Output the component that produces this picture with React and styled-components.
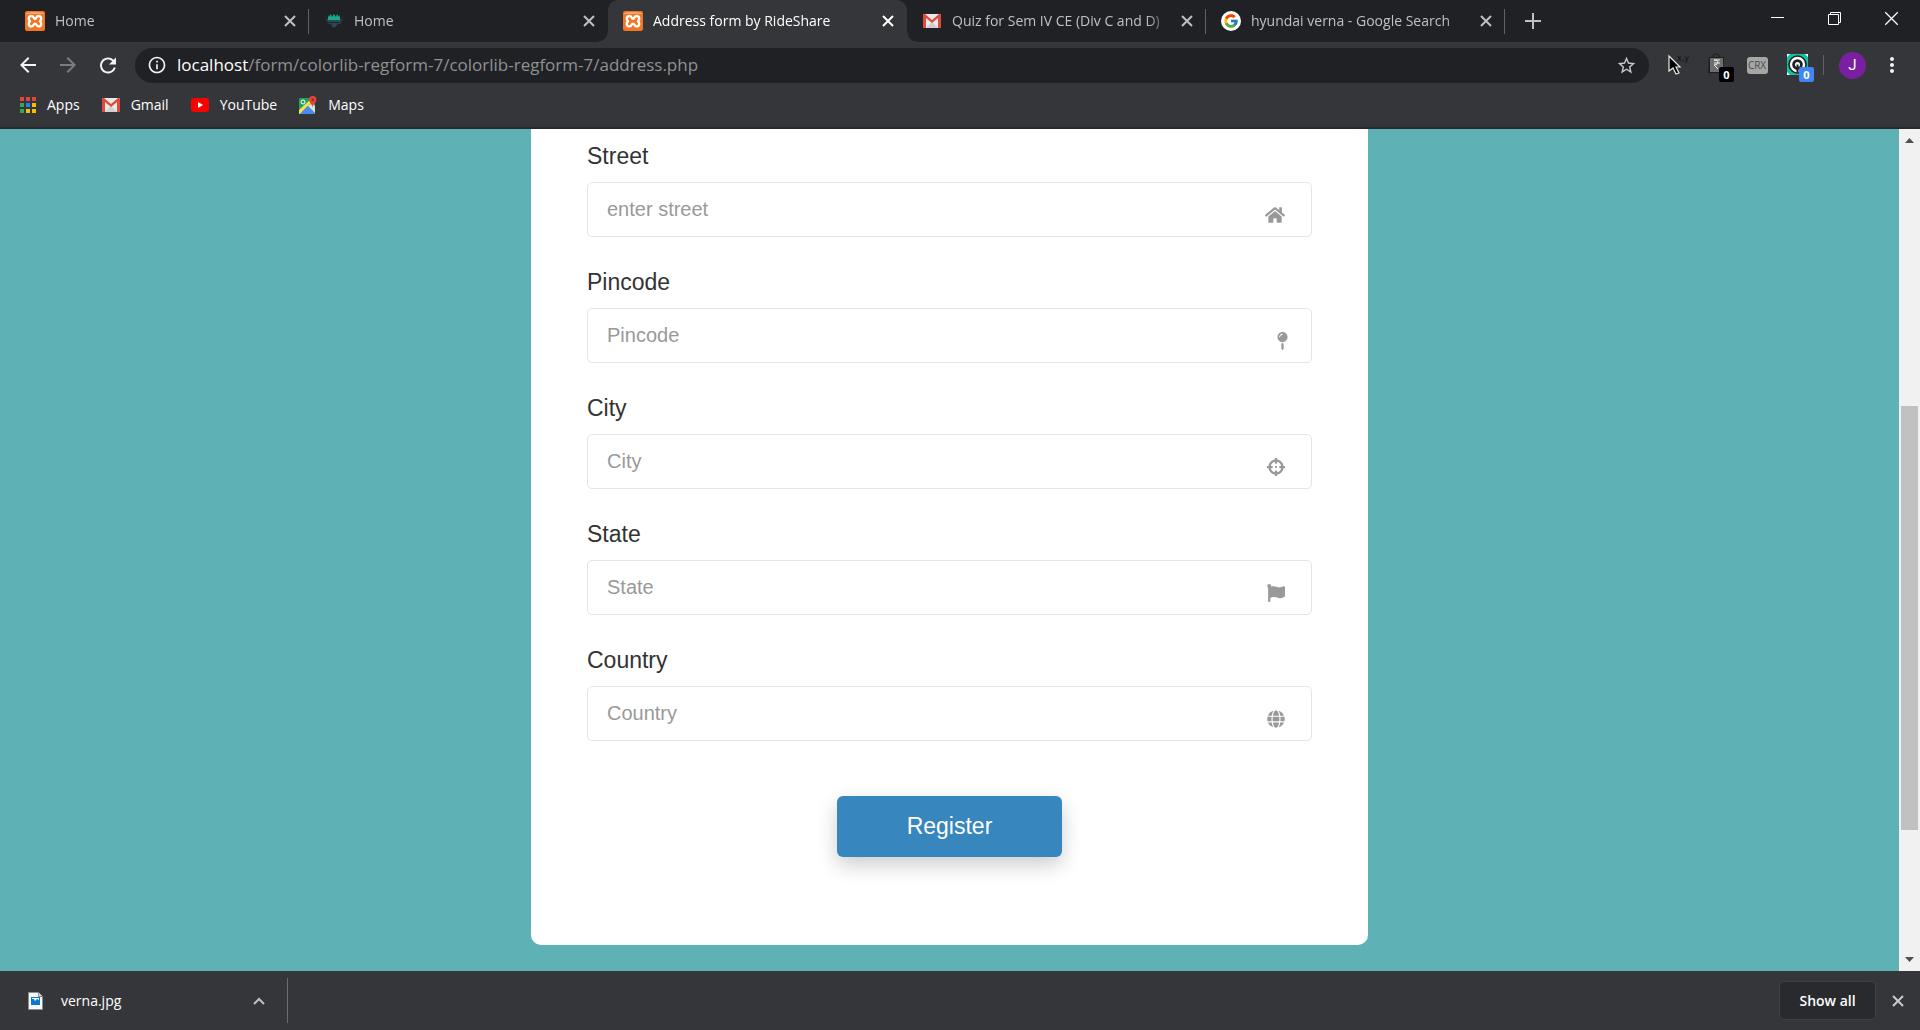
import React, { useState } from "react";
import styled, { createGlobalStyle, css } from "styled-components";
import { FaHome, FaMapPin, FaCrosshairs, FaFlag, FaGlobe } from "react-icons/fa";
import { MdArrowBack, MdArrowForward, MdRefresh, MdInfoOutline, MdStarBorder, MdMoreVert } from "react-icons/md";
import { FcGoogle } from "react-icons/fc";

const uiFont = '"Open Sans", "Noto Sans", sans-serif';
const pageFont = '"Liberation Sans", Arial, sans-serif';

const GlobalStyle = createGlobalStyle`
  *, *::before, *::after { box-sizing: border-box; }
  body { margin: 0; overflow: hidden; font-family: ${uiFont}; }
  button, input { font: inherit; }
  svg { display: block; }
`;

const Window = styled.div`
  display: grid;
  grid-template-rows: auto auto auto minmax(0, 1fr) auto;
  height: 100vh;
  background: #35363a;
`;

const PlainButton = styled.button`
  display: inline-flex;
  align-items: center;
  justify-content: center;
  flex: none;
  padding: 0;
  border: 0;
  background: none;
  color: inherit;
`;

/* ---------- tab strip ---------- */

const TabStrip = styled.header`
  display: flex;
  height: 42px;
  padding-left: 10px;
  background: #202124;
`;

const Tab = styled.div`
  position: relative;
  display: flex;
  align-items: center;
  flex: 0 1 299px;
  min-width: 0;
  padding: 0 13px 0 15px;
  color: ${(p) => (p.$active ? "#fff" : "#bdc1c6")};
  font-size: 14px;
  ${(p) =>
    p.$divider &&
    css`
      &::after {
        content: "";
        position: absolute;
        right: 0;
        top: 9px;
        width: 1px;
        height: 25px;
        background: #5f6368;
      }
    `}
  ${(p) =>
    p.$active &&
    css`
      background: #35363a;
      border-radius: 10px 10px 0 0;
      &::before,
      &::after {
        content: "";
        position: absolute;
        bottom: 0;
        width: 10px;
        height: 10px;
      }
      &::before {
        right: 100%;
        background: radial-gradient(circle at 0 0, #202124 9px, #35363a 10px);
      }
      &::after {
        left: 100%;
        background: radial-gradient(circle at 100% 0, #202124 9px, #35363a 10px);
      }
    `}
`;

const Favicon = styled.span`
  display: flex;
  justify-content: center;
  flex: 0 0 20px;
  margin-right: 10px;
`;

const TabTitle = styled.span`
  flex: 1;
  min-width: 0;
  overflow: hidden;
  white-space: nowrap;
  line-height: 20px;
  mask-image: linear-gradient(to left, transparent, #000 24px);
`;

const TabClose = styled(PlainButton)`
  width: 12px;
  margin-left: 10px;
`;

const NewTab = styled(PlainButton)`
  width: 56px;
  color: #bdc1c6;
`;

const WindowButtons = styled.div`
  display: flex;
  align-items: flex-start;
  margin-left: auto;
  color: #fff;
`;

const WindowButton = styled(PlainButton)`
  width: 57px;
  height: 36px;
`;

/* ---------- toolbar ---------- */

const Toolbar = styled.nav`
  display: flex;
  align-items: center;
  height: 46px;
  padding: 0 16px;
  color: #f1f3f4;
`;

const NavButtons = styled.div`
  display: flex;
  gap: 16px;
  margin-right: 15px;
`;

const NavButton = styled(PlainButton)`
  width: 24px;
  height: 24px;
  color: ${(p) => (p.disabled ? "#7b7c7f" : "#f1f3f4")};
`;

const AddressBar = styled.div`
  display: flex;
  align-items: center;
  gap: 10px;
  flex: 1;
  min-width: 0;
  height: 35px;
  padding: 0 12px;
  border-radius: 18px;
  background: #202124;
`;

const Url = styled.div`
  flex: 1;
  min-width: 0;
  overflow: hidden;
  white-space: nowrap;
  color: #8f9194;
  font-size: 17px;
  line-height: 24px;
  b { color: #fff; font-weight: 400; }
`;

const Extensions = styled.div`
  display: flex;
  align-items: center;
  gap: 16px;
  margin-left: 16px;
`;

const Extension = styled(PlainButton)`
  position: relative;
  width: 24px;
  height: 24px;
`;

const Badge = styled.span`
  position: absolute;
  left: 14px;
  top: 14px;
  width: 15px;
  height: 15px;
  border-radius: 2px;
  background: ${(p) => p.$color};
  color: #fff;
  font-size: 11px;
  font-weight: 700;
  line-height: 15px;
  text-align: center;
`;

const Crx = styled.span`
  width: 21px;
  border-radius: 3px;
  background: #a6a6a6;
  color: #4c4c4c;
  font-size: 10px;
  line-height: 17px;
  text-align: center;
`;

const Separator = styled.span`
  width: 1px;
  height: 20px;
  margin: 0 15px 0 14px;
  background: #5f6368;
`;

const Avatar = styled(PlainButton)`
  width: 27px;
  height: 27px;
  border-radius: 50%;
  background: #7b1fa2;
  color: #fff;
  font-family: Roboto, sans-serif;
  font-size: 15px;
`;

const MenuButton = styled(PlainButton)`
  width: 24px;
  margin-left: 14px;
`;

/* ---------- bookmarks ---------- */

const Bookmarks = styled.nav`
  display: flex;
  gap: 22px;
  height: 41px;
  padding: 0 19px 5px;
  border-bottom: 2px solid #28292c;
`;

const Bookmark = styled.a`
  display: flex;
  align-items: center;
  gap: 11px;
  color: #fff;
  font-size: 14px;
  line-height: 20px;
  text-decoration: none;
`;

/* ---------- page ---------- */

const Viewport = styled.div`
  display: flex;
  min-height: 0;
`;

const Page = styled.main`
  flex: 1;
  min-width: 0;
  padding: 0 24px;
  overflow: hidden;
  background: #5eb1b4;
  font-family: ${pageFont};
`;

const Card = styled.form`
  display: flex;
  flex-direction: column;
  gap: 29px;
  max-width: 837px;
  margin: 0 auto;
  padding: 11px 56px 88px;
  border-radius: 0 0 10px 10px;
  background: #fff;
`;

const Field = styled.div`
  display: flex;
  flex-direction: column;
  gap: 10px;
`;

const Label = styled.label`
  color: #333;
  font-size: 23px;
  line-height: 32px;
`;

const InputBox = styled.div`
  display: flex;
  align-items: center;
  height: 55px;
  padding-right: ${(p) => (p.$iconWidth < 18 ? 23 : 26)}px;
  border: 1px solid #e5e5e5;
  border-radius: 5px;
  color: #999;
  svg {
    flex: none;
    width: ${(p) => p.$iconWidth}px;
    height: 18px;
    margin-top: 10px;
  }
`;

const Input = styled.input`
  flex: 1;
  min-width: 0;
  height: 53px;
  padding: 0 19px;
  border: 0;
  outline: 0;
  background: none;
  color: #333;
  font-size: 20px;
  &::placeholder { color: #999; opacity: 1; }
`;

const Submit = styled.button`
  align-self: center;
  width: 225px;
  height: 61px;
  margin-top: 26px;
  border: 0;
  border-radius: 6px;
  background: #3786bd;
  box-shadow: 0 8px 20px rgba(0, 0, 0, 0.2);
  color: #fff;
  font-size: 23px;
`;

const Scrollbar = styled.div`
  display: flex;
  flex-direction: column;
  width: 21px;
  background: #f1f1f1;
  color: #505050;
`;

const ScrollButton = styled(PlainButton)`
  height: 23px;
`;

const Track = styled.div`
  display: grid;
  grid-template-rows: 254fr 424fr 118fr;
  flex: 1;
  padding: 0 2px;
`;

const Thumb = styled.div`
  grid-row: 2;
  background: #c1c1c1;
`;

/* ---------- download shelf ---------- */

const Shelf = styled.footer`
  display: flex;
  align-items: center;
  height: 59px;
  padding-right: 16px;
  color: #fff;
  font-size: 14px;
`;

const Download = styled.div`
  display: flex;
  align-items: center;
  width: 288px;
  height: 45px;
  padding: 0 22px 0 28px;
  border-right: 1px solid #6b6c6f;
`;

const FileName = styled.span`
  flex: 1;
  margin-left: 18px;
  line-height: 20px;
`;

const ShowAll = styled(PlainButton)`
  width: 97px;
  height: 39px;
  margin: 0 16px 0 auto;
  border: 1px solid #3f4044;
  border-radius: 5px;
  background: #292a2d;
  color: #fff;
  font-weight: 600;
`;

/* ---------- drawings ---------- */

const Cross = ({ size = 12, width = 2, color = "currentColor" }) => (
  <svg width={size} height={size} viewBox="0 0 12 12" stroke={color} strokeWidth={width}>
    <path d="M1 1L11 11M11 1L1 11" />
  </svg>
);

const Xampp = () => (
  <svg width="20" height="20" viewBox="0 0 20 20">
    <rect width="20" height="20" rx="2" fill="#f37623" />
    <path d="M1 2Q10 0 19 2V3H1Z" fill="#f9a468" />
    <path
      d="M6.5 5C3.4 5 3 8.6 5 10.2C3 11.8 3.4 15.4 6.5 15.4C9 15.4 8.2 12.6 10 12.6S11 15.4 13.5 15.4C16.6 15.4 17 11.8 15 10.2C17 8.6 16.6 5 13.5 5C11 5 11.8 7.8 10 7.8S9 5 6.5 5Z"
      fill="none"
      stroke="#fff"
      strokeWidth="2.4"
      strokeLinejoin="round"
    />
  </svg>
);

const HomeLogo = () => (
  <svg width="18" height="14" viewBox="0 0 18 14">
    <path d="M3 1L4 3L6 0L7 3L9 0L11 3L12 0L14 3L15 1V6H3Z" fill="#1aa98b" />
    <path d="M0 2L3 6H15L18 2L16 6L18 6L15 8L17 9L13 10L9 14L6 12L8 11L2 9L4 8L0 6H2Z" fill="#2d4858" />
    <path d="M4 8.5H14" stroke="#202124" />
  </svg>
);

const GmailLogo = () => (
  <svg width="18" height="14" viewBox="0 0 18 14">
    <rect width="18" height="14" rx="1" fill="#e9e9e9" />
    <path d="M3 14L9 8L15 14Z" fill="#d0d0d0" />
    <path d="M0 1Q0 0 1 0H2L9 6L16 0H17Q18 0 18 1V14H15V4L9 9L3 4V14H0Z" fill="#dd4b3e" />
  </svg>
);

const YouTubeLogo = () => (
  <svg width="18" height="14" viewBox="0 0 18 14">
    <rect width="18" height="14" rx="3" fill="#f00" />
    <path d="M7 4L12 7L7 10Z" fill="#fff" />
  </svg>
);

const MapsLogo = () => (
  <svg width="18" height="18" viewBox="0 0 18 18">
    <rect y="2" width="16" height="16" rx="1" fill="#1fa15d" />
    <path d="M0 14L12 3L14 5L1 18H0Z" fill="#ffde48" />
    <path d="M9 10L16 17V10L13 7Z" fill="#dfe0e2" />
    <path d="M1 18L8.500 10L16 18Z" fill="#4a8af4" />
    <circle cx="4" cy="6" r="2" fill="none" stroke="#fff" />
    <path d="M13.5 12C13.5 8 10 7 10 3.8A3.6 3.6 0 0 1 17.4 3.8C17.4 7 13.5 8 13.5 12Z" fill="#ea4335" />
    <circle cx="13.7" cy="3.8" r="1.3" fill="#8c2a20" />
  </svg>
);

const appColors = ["#ea4335", "#ea4335", "#ea4335", "#34a853", "#1a83ff", "#fbbc05", "#34a853", "#fbbc05", "#fbbc05"];
const AppsLogo = () => (
  <svg width="17" height="17" viewBox="0 0 17 17">
    {appColors.map((c, i) => (
      <rect key={i} x={(i % 3) * 6 + 1} y={Math.floor(i / 3) * 6} width="4" height="4" fill={c} />
    ))}
  </svg>
);

const GoogleIcon = () => (
  <svg width="20" height="20" viewBox="0 0 20 20">
    <circle cx="10" cy="10" r="10" fill="#fff" />
    <FcGoogle x="2" y="2" width="16" height="16" size={16} />
  </svg>
);

const PointerIcon = () => (
  <svg width="24" height="24" viewBox="0 0 24 24">
    <path d="M4 3V18L8 15L11 21L14 20L11 14H15Z" fill="#000" stroke="#e8e8e8" strokeWidth="1.2" />
    <text x="12" y="8" fontSize="8" fontFamily="DejaVu Sans" fill="#111">x,y</text>
  </svg>
);

const BagIcon = () => (
  <svg width="24" height="24" viewBox="0 0 24 24">
    <path d="M8 5V2Q11 0 14 2V5" fill="none" stroke="#1d1d1f" />
    <path d="M4 4H19L18 20H3Z" fill="#1d1d1f" />
    <path d="M5 5H18V15L14 19H5Z" fill="#6e6e6e" />
    <path d="M9 7H15M9 10H15M9 7Q13 7 13 9Q13 12 9 12L13 16" fill="none" stroke="#eee" />
  </svg>
);

const TargetIcon = () => (
  <svg width="24" height="24" viewBox="0 0 24 24">
    <rect x="2" y="1" width="21" height="21" fill="#13c2a3" />
    <path d="M2 1H5L2 4ZM23 1H20L23 4ZM2 22V19L5 22Z" fill="#fff" />
    <circle cx="12.5" cy="11.5" r="9.3" fill="#202124" />
    <circle cx="12.5" cy="11.5" r="6.5" fill="none" stroke="#fff" strokeWidth="2.4" />
    <circle cx="12.5" cy="11.5" r="2.5" fill="#fff" />
    <path d="M12.5 11.5V19" stroke="#202124" strokeWidth="2" />
  </svg>
);

const FileIcon = () => (
  <svg width="15" height="18" viewBox="0 0 15 18">
    <path d="M.5.5H10.5L14.5 4.5V17.5H.5Z" fill="#f7f7f7" stroke="#8d8d8d" />
    <path d="M10.5.5V4.5H14.5" fill="#ddd" stroke="#8d8d8d" />
    <rect x="3" y="5" width="9" height="8" fill="#0a78d7" />
    <path d="M4 7H6L7 9L9 7L11 8V6H4Z" fill="#fff" />
  </svg>
);

const tabs = [
  { title: "Home", icon: <Xampp />, divider: true },
  { title: "Home", icon: <HomeLogo /> },
  { title: "Address form by RideShare", icon: <Xampp />, active: true },
  { title: "Quiz for Sem IV CE (Div C and D)", icon: <GmailLogo />, divider: true },
  { title: "hyundai verna - Google Search", icon: <GoogleIcon />, divider: true },
];

const bookmarks = [
  { name: "Apps", icon: <AppsLogo /> },
  { name: "Gmail", icon: <GmailLogo /> },
  { name: "YouTube", icon: <YouTubeLogo /> },
  { name: "Maps", icon: <MapsLogo /> },
];

const fields = [
  { name: "Street", hint: "enter street", Icon: FaHome, iconWidth: 20 },
  { name: "Pincode", hint: "Pincode", Icon: FaMapPin, iconWidth: 11 },
  { name: "City", hint: "City", Icon: FaCrosshairs, iconWidth: 18 },
  { name: "State", hint: "State", Icon: FaFlag, iconWidth: 18 },
  { name: "Country", hint: "Country", Icon: FaGlobe, iconWidth: 18 },
];

export default function App() {
  const [values, setValues] = useState({});
  return (
    <Window>
      <GlobalStyle />
      <TabStrip>
        {tabs.map((t, i) => (
          <Tab key={i} $active={t.active} $divider={t.divider}>
            <Favicon>{t.icon}</Favicon>
            <TabTitle>{t.title}</TabTitle>
            <TabClose aria-label="Close tab"><Cross /></TabClose>
          </Tab>
        ))}
        <NewTab aria-label="New tab">
          <svg width="16" height="16" viewBox="0 0 16 16" stroke="currentColor" strokeWidth="2">
            <path d="M8 0V16M0 8H16" />
          </svg>
        </NewTab>
        <WindowButtons>
          <WindowButton aria-label="Minimize">
            <svg width="13" height="13" viewBox="0 0 13 13" stroke="currentColor"><path d="M0 5.5H13" /></svg>
          </WindowButton>
          <WindowButton aria-label="Restore">
            <svg width="13" height="13" viewBox="0 0 13 13" stroke="currentColor" fill="none">
              <path d="M.5 2.5H10.5V12.5H.5ZM2.5 2.5V.5H12.5V10.5H10.5" />
            </svg>
          </WindowButton>
          <WindowButton aria-label="Close"><Cross size={15} width={1} /></WindowButton>
        </WindowButtons>
      </TabStrip>

      <Toolbar aria-label="Navigation">
        <NavButtons>
          <NavButton aria-label="Back"><MdArrowBack size={24} /></NavButton>
          <NavButton aria-label="Forward" disabled><MdArrowForward size={24} /></NavButton>
          <NavButton aria-label="Reload"><MdRefresh size={25} /></NavButton>
        </NavButtons>
        <AddressBar>
          <MdInfoOutline size={20} />
          <Url><b>localhost</b>/form/colorlib-regform-7/colorlib-regform-7/address.php</Url>
          <PlainButton aria-label="Bookmark this page"><MdStarBorder size={21} color="#c8cacd" /></PlainButton>
        </AddressBar>
        <Extensions>
          <Extension aria-label="Coordinates"><PointerIcon /></Extension>
          <Extension aria-label="Price tracker"><BagIcon /><Badge $color="#000">0</Badge></Extension>
          <Extension aria-label="CRX viewer"><Crx>CRX</Crx></Extension>
          <Extension aria-label="Tracker blocker"><TargetIcon /><Badge $color="#4285f4">0</Badge></Extension>
        </Extensions>
        <Separator />
        <Avatar>J</Avatar>
        <MenuButton aria-label="Menu"><MdMoreVert size={24} /></MenuButton>
      </Toolbar>

      <Bookmarks aria-label="Bookmarks">
        {bookmarks.map((b) => (
          <Bookmark key={b.name} href="#">{b.icon}{b.name}</Bookmark>
        ))}
      </Bookmarks>

      <Viewport>
        <Page>
          <Card onSubmit={(e) => e.preventDefault()}>
            {fields.map(({ name, hint, Icon, iconWidth }) => (
              <Field key={name}>
                <Label htmlFor={name}>{name}</Label>
                <InputBox $iconWidth={iconWidth}>
                  <Input
                    id={name}
                    placeholder={hint}
                    value={values[name] || ""}
                    onChange={(e) => setValues({ ...values, [name]: e.target.value })}
                  />
                  <Icon />
                </InputBox>
              </Field>
            ))}
            <Submit type="submit">Register</Submit>
          </Card>
        </Page>
        <Scrollbar>
          <ScrollButton aria-label="Scroll up">
            <svg width="9" height="5" viewBox="0 0 9 5" fill="currentColor"><path d="M0 5L4.5 0L9 5Z" /></svg>
          </ScrollButton>
          <Track><Thumb /></Track>
          <ScrollButton aria-label="Scroll down">
            <svg width="9" height="5" viewBox="0 0 9 5" fill="currentColor"><path d="M0 0H9L4.5 5Z" /></svg>
          </ScrollButton>
        </Scrollbar>
      </Viewport>

      <Shelf>
        <Download>
          <FileIcon />
          <FileName>verna.jpg</FileName>
          <PlainButton aria-label="Download options">
            <svg width="12" height="8" viewBox="0 0 12 8" fill="none" stroke="#bdc1c6" strokeWidth="2"><path d="M1 7L6 2L11 7" /></svg>
          </PlainButton>
        </Download>
        <ShowAll>Show all</ShowAll>
        <PlainButton aria-label="Close downloads"><Cross color="#c8cacd" /></PlainButton>
      </Shelf>
    </Window>
  );
}
